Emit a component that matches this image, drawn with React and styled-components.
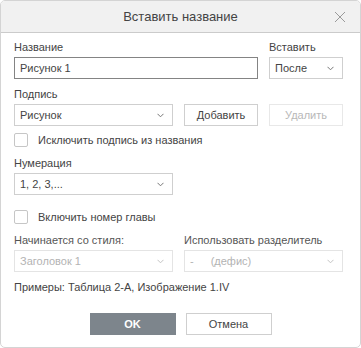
import React from "react";
import styled, { createGlobalStyle } from "styled-components";

const Global = createGlobalStyle`
  html, body { margin: 0; padding: 0; background: #ffffff; }
  * { box-sizing: border-box; }
`;

const Dialog = styled.div`
  width: 361px;
  height: 348px;
  border: 1px solid #d4d4d4;
  border-radius: 5px;
  overflow: hidden;
  background: #fff;
  font-family: "Liberation Sans", Arial, sans-serif;
  font-size: 11px;
  color: #444;
  display: flex;
  flex-direction: column;
`;

const Header = styled.div`
  position: relative;
  height: 32px;
  flex: none;
  background: #f1f1f1;
  border-bottom: 1px solid #cbcbcb;
  display: flex;
  align-items: center;
  justify-content: center;
  font-size: 13px;
  color: #444;
`;

const Close = styled.div`
  position: absolute;
  right: 14px;
  top: 10px;
  width: 12px;
  height: 12px;
  display: flex;
`;

const Body = styled.div`
  padding: 7px 13px 0 13px;
  display: grid;
  grid-template-columns: 159px 74px 74px;
  column-gap: 11px;
`;

const Field = styled.div`
  grid-column: ${(p) => p.$col || "auto"};
  display: flex;
  flex-direction: column;
  gap: 3px;
  margin-top: ${(p) => p.$mt || 0}px;
  align-self: end;
`;

const Label = styled.div`
  height: 14px;
  line-height: 14px;
  color: ${(p) => (p.$muted ? "#555" : "#444")};
  white-space: nowrap;
`;

const Input = styled.div`
  height: 22px;
  border: 1px solid ${(p) => (p.$focus ? "#848484" : "#cfcfcf")};
  padding: 0 5px;
  display: flex;
  align-items: center;
  font-size: 11px;
  color: #444;
`;

const Select = styled.div`
  height: 22px;
  border: 1px solid ${(p) => (p.$disabled ? "#e4e4e4" : "#cfcfcf")};
  padding: 0 8px 0 5px;
  display: flex;
  align-items: center;
  justify-content: space-between;
  color: ${(p) => (p.$disabled ? "#b3b3b3" : "#444")};
`;

const Button = styled.div`
  grid-column: ${(p) => p.$col || "auto"};
  height: 22px;
  align-self: end;
  border: 1px solid ${(p) => (p.$disabled ? "#e8e8e8" : "#cfcfcf")};
  color: ${(p) => (p.$disabled ? "#b8b8b8" : "#444")};
  display: flex;
  align-items: center;
  justify-content: center;
  background: #fff;
`;

const CheckRow = styled.div`
  grid-column: 1 / -1;
  display: flex;
  align-items: center;
  gap: 10px;
  height: 14px;
  margin-top: ${(p) => p.$mt || 0}px;
`;

const Box = styled.div`
  width: 14px;
  height: 14px;
  border: 1px solid #c6c6c6;
  border-radius: 2px;
  background: #fff;
`;

const Example = styled.div`
  grid-column: 1 / -1;
  margin-top: 8px;
  height: 14px;
  line-height: 14px;
`;

const Footer = styled.div`
  display: flex;
  justify-content: center;
  gap: 10px;
  margin-top: 19px;
`;

const FootButton = styled.div`
  width: 86px;
  height: 22px;
  display: flex;
  align-items: center;
  justify-content: center;
  font-size: 11px;
  font-weight: ${(p) => (p.$primary ? 700 : 400)};
  background: ${(p) => (p.$primary ? "#7d858c" : "#fff")};
  color: ${(p) => (p.$primary ? "#fff" : "#444")};
  border: 1px solid ${(p) => (p.$primary ? "#7d858c" : "#cfcfcf")};
`;

const Sep = styled.span`
  display: inline-block;
  width: 17px;
`;

const Chevron = ({ light }) => (
  <svg width="7" height="5" viewBox="0 0 7 5">
    <path d="M0.5 0.8 L3.5 3.8 L6.5 0.8" fill="none" stroke={light ? "#c4c4c4" : "#777"} strokeWidth="1" />
  </svg>
);

export default function App() {
  return (
    <>
      <Global />
      <Dialog>
        <Header>
          Вставить название
          <Close>
            <svg width="12" height="12" viewBox="0 0 12 12">
              <path d="M1 1 L11 11 M11 1 L1 11" stroke="#9a9a9a" strokeWidth="1" fill="none" />
            </svg>
          </Close>
        </Header>
        <Body>
          <Field $col="1 / 3">
            <Label>Название</Label>
            <Input $focus>Рисунок 1</Input>
          </Field>
          <Field $col="3">
            <Label>Вставить</Label>
            <Select>
              После
              <Chevron />
            </Select>
          </Field>

          <Field $col="1" $mt={8}>
            <Label>Подпись</Label>
            <Select>
              Рисунок
              <Chevron />
            </Select>
          </Field>
          <Button $col="2">Добавить</Button>
          <Button $col="3" $disabled>Удалить</Button>

          <CheckRow $mt={7}>
            <Box />
            Исключить подпись из названия
          </CheckRow>

          <Field $col="1" $mt={9}>
            <Label>Нумерация</Label>
            <Select>
              1, 2, 3,...
              <Chevron />
            </Select>
          </Field>

          <CheckRow $mt={15}>
            <Box />
            Включить номер главы
          </CheckRow>

          <Field $col="1" $mt={9}>
            <Label $muted>Начинается со стиля:</Label>
            <Select $disabled>
              Заголовок 1
              <Chevron light />
            </Select>
          </Field>
          <Field $col="2 / 4" $mt={9}>
            <Label $muted>Использовать разделитель</Label>
            <Select $disabled>
              <span>
                -<Sep />(дефис)
              </span>
              <Chevron light />
            </Select>
          </Field>

          <Example>Примеры: Таблица 2-А, Изображение 1.IV</Example>
        </Body>
        <Footer>
          <FootButton $primary>OK</FootButton>
          <FootButton>Отмена</FootButton>
        </Footer>
      </Dialog>
    </>
  );
}
